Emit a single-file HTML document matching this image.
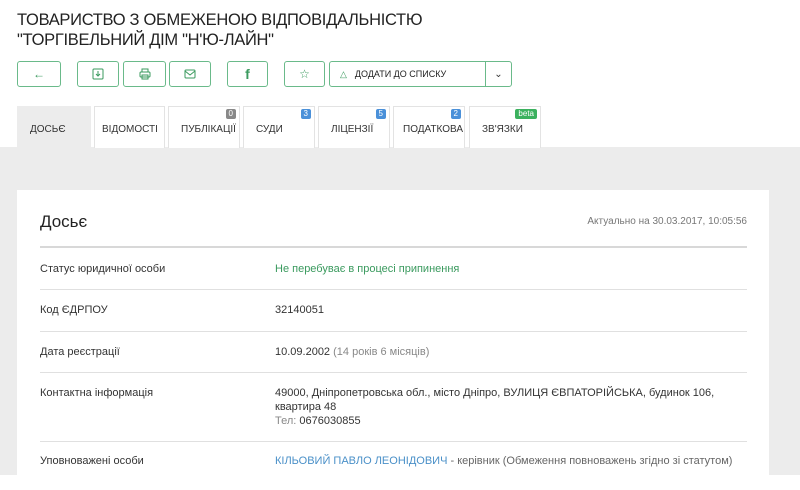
<!DOCTYPE html>
<html><head><meta charset="utf-8"><style>
*{margin:0;padding:0;box-sizing:border-box}
body{width:800px;height:475px;overflow:hidden;background:#fff;font-family:"Liberation Sans",sans-serif;color:#333;position:relative}
h1{position:absolute;left:17px;top:10px;font-size:16.5px;font-weight:normal;line-height:20px;color:#222;letter-spacing:-.3px}
.b{position:absolute;top:61px;height:26px;border:1px solid #6aba8a;border-radius:3px;background:#fff;display:flex;align-items:center;justify-content:center;color:#3a9a5e;font-size:12px}
.tab{position:absolute;top:106px;height:42px;border:1px solid #e3e3e3;border-bottom:none;background:#fff;font-size:10px;color:#333;padding-left:12px;line-height:46px}
.tab.a{background:#ececec;border-color:#ececec}
.badge{position:absolute;right:3px;top:2px;font-size:8px;line-height:10px;padding:0 3px;border-radius:2px;color:#fff;background:#4a90d9}
.grey{position:absolute;top:147px;left:0;width:800px;height:328px;background:#ececec}
.card{position:absolute;left:17px;top:190px;width:752px;height:300px;background:#fff}
.row{position:absolute;left:23px;width:707px;border-top:1px solid #e0e0e0;font-size:11px}
.l{position:absolute;left:0}
.v{position:absolute;left:235px;line-height:15px}
</style></head><body>
<h1>ТОВАРИСТВО З ОБМЕЖЕНОЮ ВІДПОВІДАЛЬНІСТЮ<br>"ТОРГІВЕЛЬНИЙ ДІМ "Н'Ю-ЛАЙН"</h1>
<div class="b" style="left:17px;width:44px">&#8592;</div>
<div class="b" style="left:77px;width:42px"><svg width="12" height="12" viewBox="0 0 12 12" fill="none" stroke="#3a9a5e"><rect x="1" y="1" width="10" height="10" rx="1"/><path d="M6 3v5M4 6l2 2 2-2"/></svg></div>
<div class="b" style="left:123px;width:43px"><svg width="12" height="12" viewBox="0 0 12 12" fill="none" stroke="#3a9a5e"><rect x="3" y="1" width="6" height="3"/><rect x="1" y="4" width="10" height="5" rx="1"/><rect x="3" y="7" width="6" height="4"/></svg></div>
<div class="b" style="left:169px;width:42px"><svg width="12" height="10" viewBox="0 0 12 10" fill="none" stroke="#3a9a5e"><rect x="1" y="1" width="10" height="8" rx="1"/><path d="M1 2l5 4 5-4"/></svg></div>
<div class="b" style="left:227px;width:41px;font-weight:bold;font-size:14px">f</div>
<div class="b" style="left:284px;width:41px">&#9734;</div>
<div class="b" style="left:329px;width:157px;justify-content:flex-start;padding-left:10px;font-size:9px;color:#222;border-radius:3px 0 0 3px"><span style="color:#3a9a5e;margin-right:8px">&#9651;</span>ДОДАТИ ДО СПИСКУ</div>
<div class="b" style="left:485px;width:27px;border-radius:0 3px 3px 0;color:#333;font-size:10px">&#8964;</div>
<div class="grey"></div>
<div class="tab a" style="left:17px;width:74px">ДОСЬЄ</div>
<div class="tab" style="left:94px;width:71px;padding-left:7px">ВІДОМОСТІ</div>
<div class="tab" style="left:168px;width:72px">ПУБЛІКАЦІЇ<span class="badge" style="background:#888">0</span></div>
<div class="tab" style="left:243px;width:72px">СУДИ<span class="badge">3</span></div>
<div class="tab" style="left:318px;width:72px">ЛІЦЕНЗІЇ<span class="badge">5</span></div>
<div class="tab" style="left:393px;width:72px;padding-left:9px">ПОДАТКОВА<span class="badge">2</span></div>
<div class="tab" style="left:469px;width:72px">ЗВ'ЯЗКИ<span class="badge" style="background:#3bb15e">beta</span></div>
<div class="card">
<div style="position:absolute;left:23px;top:22px;font-size:17px;color:#222">Досьє</div>
<div style="position:absolute;right:22px;top:26px;font-size:10px;color:#777">Актуально на 30.03.2017, 10:05:56</div>
<div style="position:absolute;left:23px;top:56px;width:707px;height:2px;background:#d8d8d8"></div>
<div class="row" style="top:58px;border:none"><span class="l" style="top:15px">Статус юридичної особи</span><span class="v" style="top:14px;color:#3a9a5e">Не перебуває в процесі припинення</span></div>
<div class="row" style="top:99px"><span class="l" style="top:14px">Код ЄДРПОУ</span><span class="v" style="top:13px">32140051</span></div>
<div class="row" style="top:141px"><span class="l" style="top:14px">Дата реєстрації</span><span class="v" style="top:13px">10.09.2002 <span style="color:#888">(14 років 6 місяців)</span></span></div>
<div class="row" style="top:182px"><span class="l" style="top:14px">Контактна інформація</span><span class="v" style="top:13px;line-height:14px">49000, Дніпропетровська обл., місто Дніпро, ВУЛИЦЯ ЄВПАТОРІЙСЬКА, будинок 106,<br>квартира 48<br><span style="color:#888">Тел:</span> 0676030855</span></div>
<div class="row" style="top:251px"><span class="l" style="top:13px">Уповноважені особи</span><span class="v" style="top:12px;white-space:nowrap"><span style="color:#4a90c8">КІЛЬОВИЙ ПАВЛО ЛЕОНІДОВИЧ</span> <span style="color:#666">- керівник (Обмеження повноважень згідно зі статутом)</span></span></div>
</div>
</body></html>
